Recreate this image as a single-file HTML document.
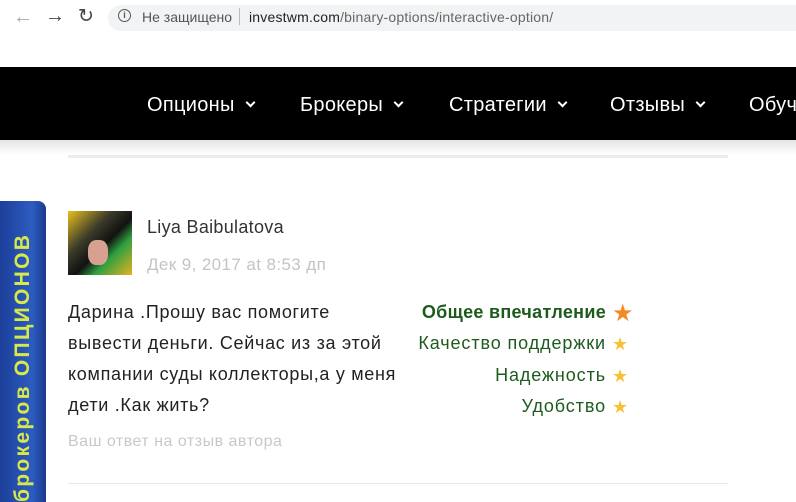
<!DOCTYPE html>
<html><head><meta charset="utf-8"><style>
*{margin:0;padding:0;box-sizing:border-box}
body{width:796px;height:502px;overflow:hidden;background:#fff;font-family:"Liberation Sans","DejaVu Sans",sans-serif;position:relative}
.abs{position:absolute}
.url{left:108px;top:5px;width:700px;height:26px;background:#f1f3f4;border-radius:13px}
.nav{left:0;top:67px;width:796px;height:73px;background:#000;overflow:hidden}
.nav span{position:absolute;top:27px;color:#fff;font-size:20px;white-space:nowrap;letter-spacing:0.3px}
.chev{display:inline-block;width:7px;height:7px;border-right:2.5px solid #fff;border-bottom:2.5px solid #fff;transform:rotate(45deg);margin-left:12px;position:relative;top:-5px}
.txt{font-size:18px;color:#222;line-height:31px;letter-spacing:0.7px;white-space:nowrap}
.r{position:absolute;right:190px;font-size:18px;color:#1d5b1d;white-space:nowrap;text-align:right;letter-spacing:0.9px}
.st{position:absolute;left:612px;font-size:18px;color:#f7c230}
</style></head><body>
<div class="abs" style="left:13px;top:6px;color:#aaa;font-size:20px">←</div>
<div class="abs" style="left:45px;top:5px;color:#444;font-size:20px">→</div>
<div class="abs" style="left:78px;top:5px;color:#444;font-size:19px">↻</div>
<div class="abs url"></div>
<div class="abs" style="left:118px;top:9px;width:13px;height:13px;border:1.5px solid #555;border-radius:50%;font-size:9px;text-align:center;line-height:11px;color:#555;font-weight:bold">i</div>
<div class="abs" style="left:142px;top:9px;font-size:14px;color:#555">Не защищено</div>
<div class="abs" style="left:239px;top:8px;width:1px;height:17px;background:#bbb"></div>
<div class="abs" style="left:249px;top:9px;font-size:14px;color:#666;letter-spacing:0.2px"><span style="color:#222">investwm.com</span>/binary-options/interactive-option/</div>
<div class="abs nav">
<span style="left:147px">Опционы<i class="chev"></i></span>
<span style="left:300px">Брокеры<i class="chev"></i></span>
<span style="left:449px">Стратегии<i class="chev"></i></span>
<span style="left:610px">Отзывы<i class="chev"></i></span>
<span style="left:749px">Обучение</span>
</div>
<div class="abs" style="left:0;top:140px;width:796px;height:14px;background:linear-gradient(#e4e4e4,#fff)"></div>
<div class="abs" style="left:68px;top:155px;width:660px;height:3px;background:#ececec"></div>
<div class="abs" style="left:0;top:201px;width:46px;height:301px;background:linear-gradient(90deg,#1c3f9a,#2d5cc0 70%,#1a3a8c);border-radius:0 8px 0 0"></div>
<div class="abs" style="left:10px;top:502px;transform-origin:0 0;transform:rotate(-90deg);white-space:nowrap;color:#d6e84a;font-size:21px;font-weight:bold;line-height:26px;letter-spacing:2.3px">брокеров ОПЦИОНОВ</div>
<div class="abs" style="left:68px;top:211px;width:64px;height:64px;background:linear-gradient(135deg,#e8c020 0,#3a3a2a 35%,#111 55%,#2fa040 70%,#e6b020 100%)"></div>
<div class="abs" style="left:88px;top:240px;width:20px;height:25px;background:#d7a090;border-radius:40%"></div>
<div class="abs" style="left:147px;top:217px;font-size:18px;color:#333;letter-spacing:0.3px">Liya Baibulatova</div>
<div class="abs" style="left:147px;top:255px;font-size:17px;color:#c4c4c4;letter-spacing:0.4px">Дек 9, 2017 at 8:53 дп</div>
<div class="abs txt" style="left:68px;top:297px">Дарина .Прошу вас помогите<br>вывести деньги. Сейчас из за этой<br>компании суды коллекторы,а у меня<br>дети .Как жить?</div>
<div class="abs" style="left:68px;top:433px;font-size:16px;color:#c8c8c8;letter-spacing:0.5px">Ваш ответ на отзыв автора</div>
<div class="r" style="top:302px;font-weight:bold;letter-spacing:0.3px">Общее впечатление</div><div class="st" style="top:299px;color:#f48a24;font-size:24px">★</div>
<div class="r" style="top:333px">Качество поддержки</div><div class="st" style="top:334px">★</div>
<div class="r" style="top:365px">Надежность</div><div class="st" style="top:366px">★</div>
<div class="r" style="top:396px">Удобство</div><div class="st" style="top:397px">★</div>
<div class="abs" style="left:68px;top:483px;width:660px;height:1px;background:#e8e8e8"></div>
</body></html>
